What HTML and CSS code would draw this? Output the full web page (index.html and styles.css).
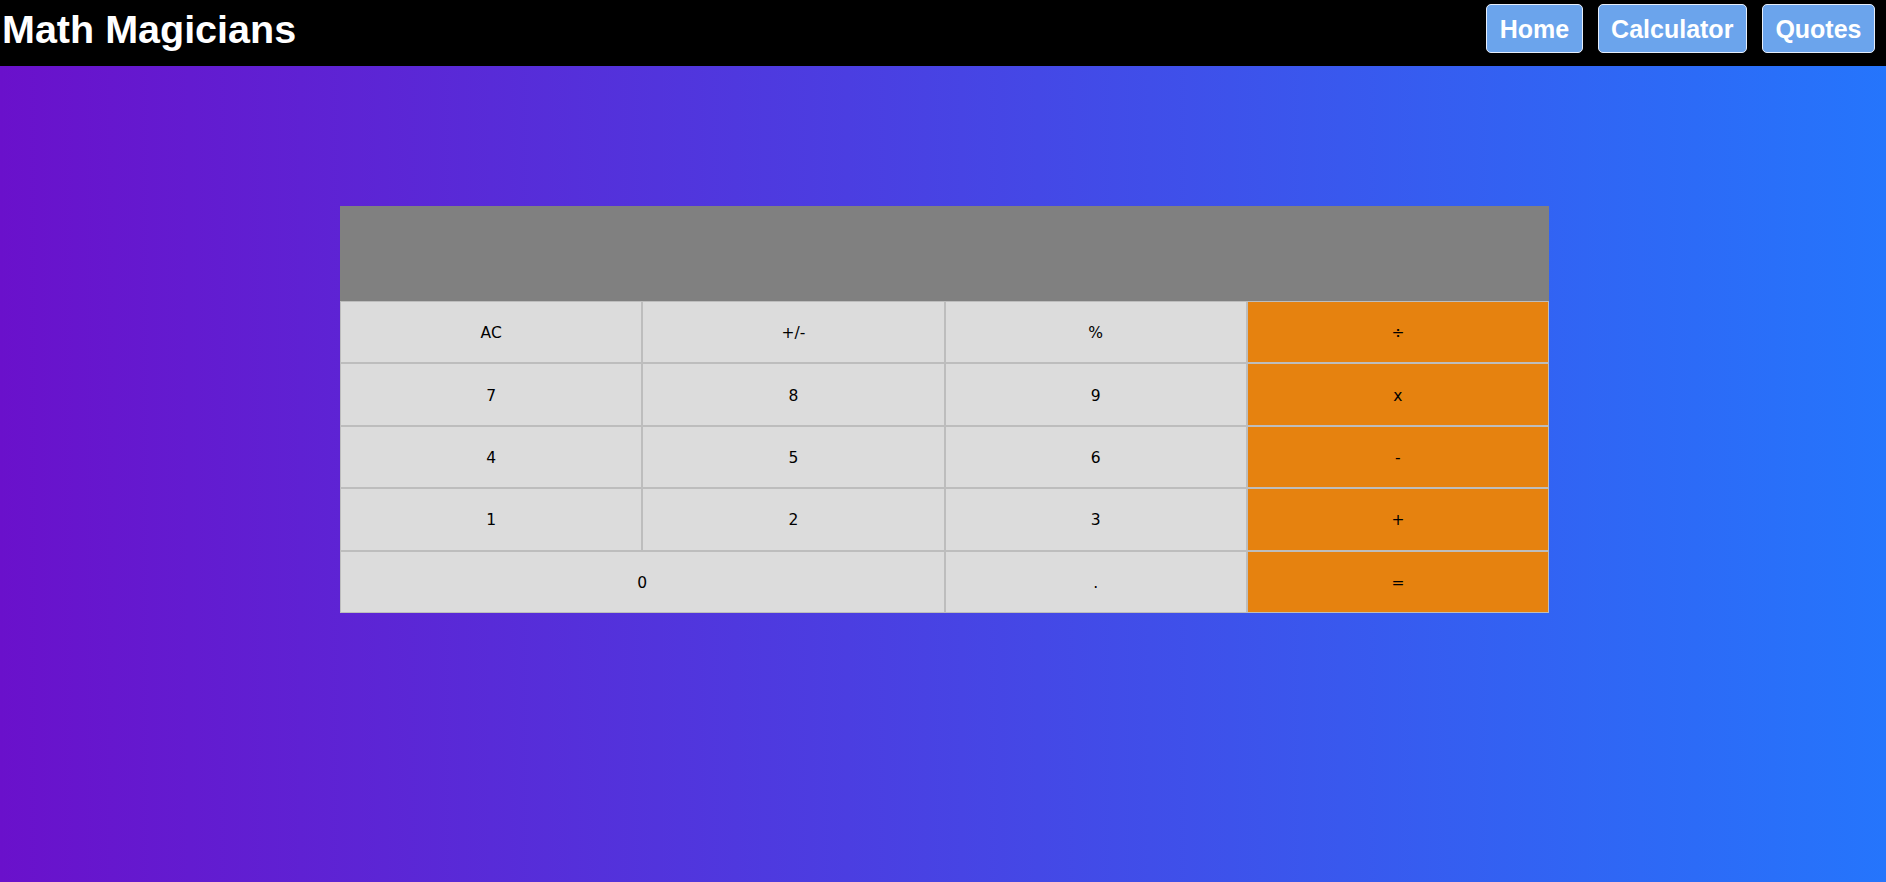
FILE: index.html
```html
<!DOCTYPE html>
<html lang="en">
<head>
<meta charset="utf-8">
<title>Math Magicians</title>
<link rel="stylesheet" href="styles.css">
</head>
<body>
<header class="topbar">
  <h1 class="brand">Math Magicians</h1>
  <nav class="nav">
    <a class="nav-link" href="#">Home</a>
    <a class="nav-link" href="#">Calculator</a>
    <a class="nav-link" href="#">Quotes</a>
  </nav>
</header>
<main class="page">
  <section class="calculator">
    <div class="display"></div>
    <div class="keys">
      <button class="key">AC</button>
      <button class="key">+/-</button>
      <button class="key">%</button>
      <button class="key op">÷</button>
      <button class="key">7</button>
      <button class="key">8</button>
      <button class="key">9</button>
      <button class="key op">x</button>
      <button class="key">4</button>
      <button class="key">5</button>
      <button class="key">6</button>
      <button class="key op">-</button>
      <button class="key">1</button>
      <button class="key">2</button>
      <button class="key">3</button>
      <button class="key op">+</button>
      <button class="key wide">0</button>
      <button class="key">.</button>
      <button class="key op">=</button>
    </div>
  </section>
</main>
</body>
</html>
```
FILE: styles.css
```css
* { box-sizing: border-box; }
html, body { margin: 0; padding: 0; }
body {
  min-height: 882px;
  background: linear-gradient(to right, #6a11cb, #2575fc);
  font-family: "Liberation Sans", Arial, sans-serif;
}
.topbar {
  height: 66px;
  background: #000;
  display: flex;
  justify-content: space-between;
  align-items: flex-start;
  padding: 0 11px 0 2px;
}
.brand {
  margin: 7px 0 0 0;
  font-size: 39.5px;
  line-height: 45px;
  font-weight: bold;
  color: #fff;
}
.nav {
  display: flex;
  gap: 15px;
  margin-top: 4px;
}
.nav-link {
  display: block;
  height: 49px;
  padding: 10px 12.5px 8px;
  font-size: 25px;
  line-height: 29px;
  font-weight: bold;
  color: #fff;
  text-decoration: none;
  background: #6ba4ec;
  border: 1px solid #e6eefb;
  border-radius: 5px;
}
.page {
  padding-top: 140px;
}
.calculator {
  width: 1209px;
  margin-left: 340px;
}
.display {
  height: 95px;
  background: #808080;
}
.keys {
  display: grid;
  grid-template-columns: repeat(4, 1fr);
  grid-auto-rows: 62.4px;
}
.key {
  margin: 0;
  border: 1px solid #bdbdbd;
  background: #dcdcdc;
  font-family: "DejaVu Sans", Verdana, sans-serif;
  font-size: 15.5px;
  color: #000;
  padding: 2px 0 0;
}
.key.op { background: #e6820f; }
.key.wide { grid-column: span 2; }
```
